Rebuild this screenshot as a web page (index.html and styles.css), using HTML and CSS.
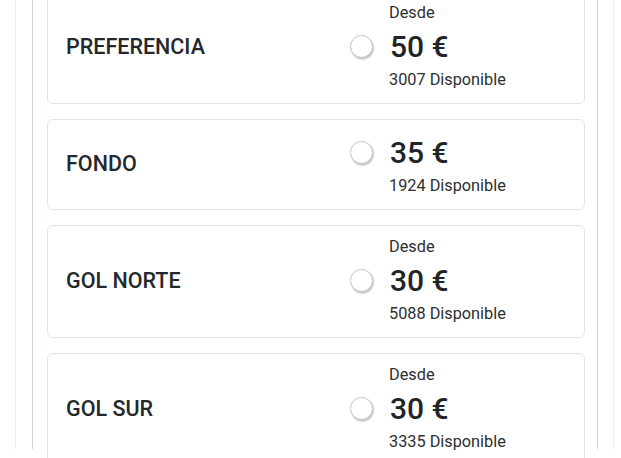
FILE: index.html
```html
<!DOCTYPE html>
<html lang="es">
<head>
    <meta charset="UTF-8">
    <meta name="viewport" content="width=device-width, initial-scale=1.0">
    <title>Zonas</title>
    <link rel="stylesheet" href="styles.css">
</head>
<body>
    <div class="page">
        <div class="zone">
            <div class="zone-list">
                <label class="zone-card">
                    <span class="zone-name">PREFERENCIA</span>
                    <span class="zone-offer">
                        <span class="zone-from">Desde</span>
                        <span class="zone-price-row">
                            <input type="radio" name="zone" class="zone-radio">
                            <span class="zone-price">50 €</span>
                        </span>
                        <span class="zone-stock">3007 Disponible</span>
                    </span>
                </label>

                <label class="zone-card">
                    <span class="zone-name">FONDO</span>
                    <span class="zone-offer">
                        <span class="zone-price-row">
                            <input type="radio" name="zone" class="zone-radio">
                            <span class="zone-price">35 €</span>
                        </span>
                        <span class="zone-stock">1924 Disponible</span>
                    </span>
                </label>

                <label class="zone-card">
                    <span class="zone-name">GOL NORTE</span>
                    <span class="zone-offer">
                        <span class="zone-from">Desde</span>
                        <span class="zone-price-row">
                            <input type="radio" name="zone" class="zone-radio">
                            <span class="zone-price">30 €</span>
                        </span>
                        <span class="zone-stock">5088 Disponible</span>
                    </span>
                </label>

                <label class="zone-card">
                    <span class="zone-name">GOL SUR</span>
                    <span class="zone-offer">
                        <span class="zone-from">Desde</span>
                        <span class="zone-price-row">
                            <input type="radio" name="zone" class="zone-radio">
                            <span class="zone-price">30 €</span>
                        </span>
                        <span class="zone-stock">3335 Disponible</span>
                    </span>
                </label>
            </div>
        </div>
    </div>
</body>
</html>
```

FILE: styles.css
```css
* {
    margin: 0;
    padding: 0;
    box-sizing: border-box;
}

body {
    background-color: #fff;
    color: #212529;
    font-family: Roboto, "Liberation Sans", Arial, sans-serif;
    height: 100vh;
    overflow: hidden;
}

.page {
    margin: 0 7px 0 15px;
    height: 100%;
    border-left: 1px solid #ececec;
    border-right: 1px solid #ececec;
    padding: 0 15px 0 16px;
}

.zone {
    height: 100%;
    border-left: 1px solid #c9d5e4;
    border-right: 1px solid #c9d5e4;
    padding: 0 12px 0 14px;
}

.zone-list {
    margin-top: -9px;
    display: flex;
    flex-direction: column;
    gap: 15px;
}

.zone-card {
    display: grid;
    grid-template-columns: 284px 1fr;
    align-items: center;
    padding: 10px 18px 11px 18px;
    border: 1px solid #e3e3e3;
    border-radius: 6px;
    background-color: #fff;
    cursor: pointer;
}

.zone-name {
    font-size: 21.5px;
    font-weight: 500;
    color: #24282c;
    margin-top: -2px;
}

.zone-offer {
    display: flex;
    flex-direction: column;
}

.zone-from,
.zone-stock {
    padding-left: 39px;
    font-size: 16.3px;
    color: #2b2f33;
}

.zone-from {
    line-height: 22px;
}

.zone-stock {
    line-height: 24px;
}

.zone-price-row {
    display: flex;
    align-items: center;
    gap: 17px;
    height: 44px;
}

.zone-price {
    font-size: 30px;
    font-weight: 500;
    color: #212529;
}

.zone-radio {
    appearance: none;
    width: 23px;
    height: 23px;
    border: 1.5px solid #c4c4c4;
    border-radius: 50%;
    background-color: #fff;
    box-shadow: 1px 1.5px 1.5px rgba(0, 0, 0, 0.22);
    flex-shrink: 0;
}
```
